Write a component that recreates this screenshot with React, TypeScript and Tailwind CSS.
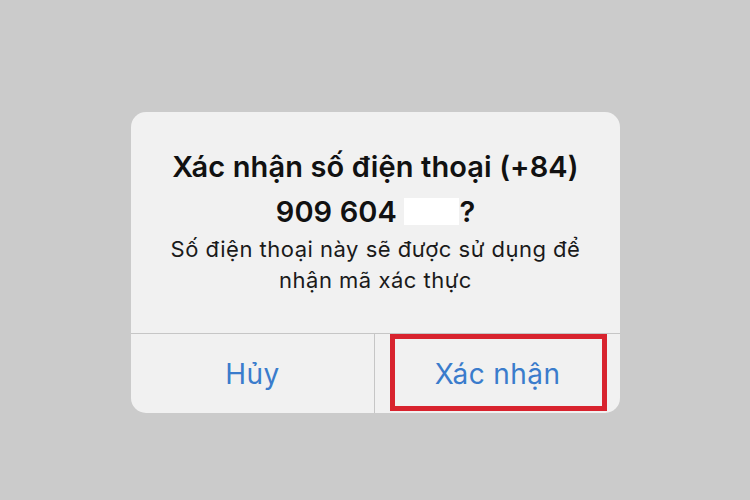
import React from "react";

export default function App() {
  return (
    <div
      className="w-[750px] h-[500px] bg-[#cbcbcb] pt-[112px] overflow-hidden"
      style={{ fontFamily: "Inter, 'Noto Sans', sans-serif" }}
    >
      <div className="ml-[131px] w-[489px] h-[301px] bg-[#f1f1f1] rounded-[15px] flex flex-col overflow-hidden">
        <div className="h-[221px] pt-[32px] flex flex-col items-center text-center">
          <div className="text-[29px] leading-[45px] font-semibold tracking-[0.1px] text-[#111111]">
            <div>Xác nhận số điện thoại (+84)</div>
            <div className="flex items-center justify-center">
              <span>909 604&nbsp;</span>
              <span className="inline-block w-[55px] h-[27px] bg-white"></span>
              <span>?</span>
            </div>
          </div>
          <div className="text-[22px] leading-[31px] tracking-[0.5px] text-[#1a1a1a]">
            <div>Số điện thoại này sẽ được sử dụng để</div>
            <div>nhận mã xác thực</div>
          </div>
        </div>
        <div className="flex-1 flex border-t border-[#c6c6c6]">
          <div className="w-[244px] flex items-center justify-center border-r border-[#c6c6c6] text-[28px] tracking-[0.4px] text-[#3a7ccc]">
            Hủy
          </div>
          <div className="relative flex-1 flex items-center justify-center text-[28px] tracking-[0.4px] text-[#3a7ccc]">
            Xác nhận
            <div className="absolute left-[15px] right-[13px] top-0 bottom-[2px] border-[5px] border-[#d8232e]"></div>
          </div>
        </div>
      </div>
    </div>
  );
}
